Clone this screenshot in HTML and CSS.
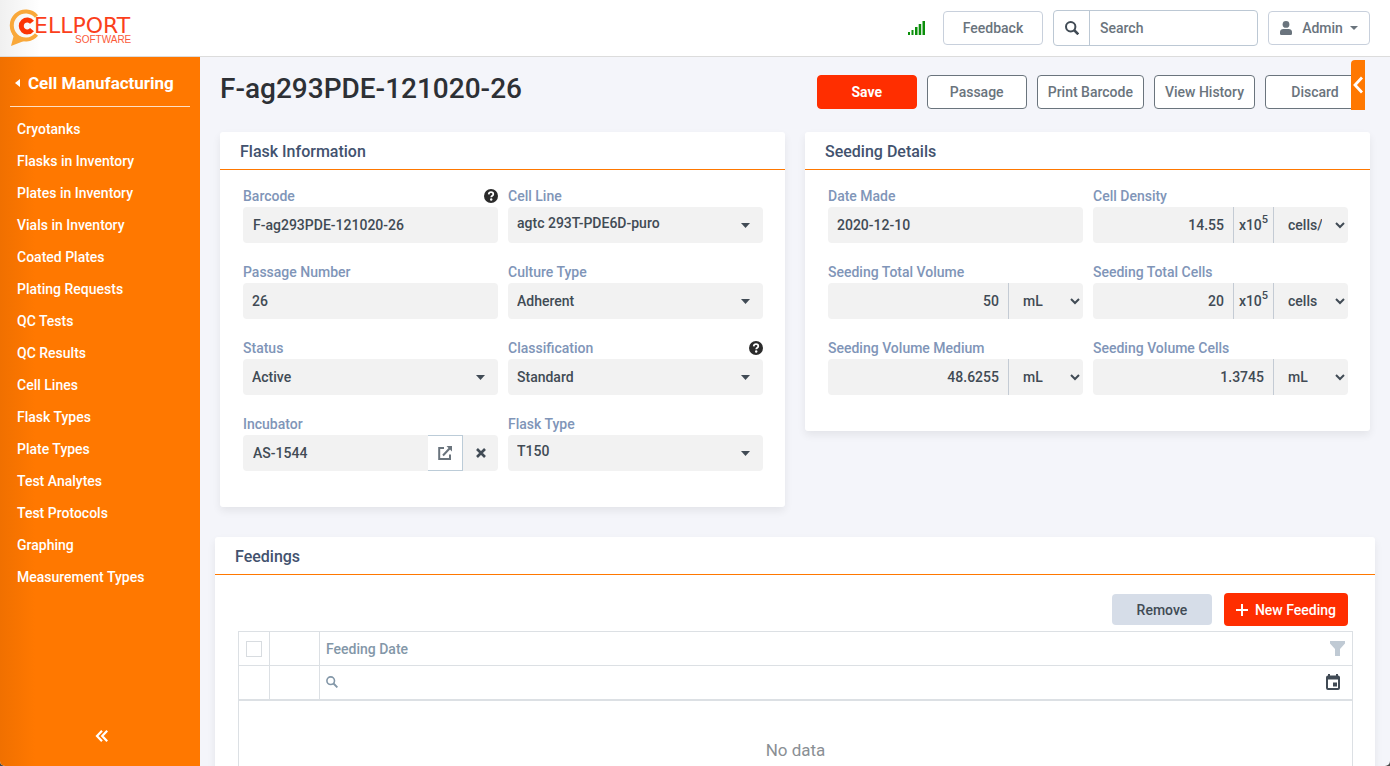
FILE: index.html
```html
<!DOCTYPE html>
<html lang="en">
<head>
<meta charset="utf-8">
<title>F-ag293PDE-121020-26</title>
<link rel="stylesheet" href="styles.css">
</head>
<body>
<div class="app">
  <header class="topbar">
    <a class="logo" href="#" aria-label="Cellport Software">
      <svg width="130" height="40" viewBox="0 0 130 40">
        <path d="M27.500 8.500A14 14 0 1 0 27.500 26.500" fill="none" stroke="#f9a83a" stroke-width="4"/>
        <path d="M3 25L4.500 28.500L2 38L15 33L12 29Z" fill="#f9a83a"/>
        <path d="M23 14.200A6 6 0 1 0 23 21.600" fill="none" stroke="#fb3505" stroke-width="5"/>
        <text class="logo-name" x="25" y="25">ELLPORT</text>
        <text class="logo-sub" x="66" y="35">SOFTWARE</text>
      </svg>
    </a>
    <div class="tools">
      <svg class="signal" width="18" height="14" viewBox="0 0 18 14" fill="#0b8f0b"><rect x="0" y="11" width="2" height="3"/><rect x="3.500" y="9" width="2" height="5"/><rect x="7" y="6" width="2.500" height="8"/><rect x="10.700" y="3" width="2.500" height="11"/><rect x="14.500" y="0" width="2.500" height="14"/></svg>
      <button class="btn btn-light" type="button">Feedback</button>
      <form class="search">
        <button class="search-btn" type="button" aria-label="Search"><svg width="14" height="14" viewBox="0 0 14 14" fill="none" stroke="#414b55" stroke-width="2"><circle cx="5.700" cy="5.700" r="4.700"/><path d="M9 9L13.300 13.300" stroke-width="2.600"/></svg></button>
        <input class="search-input" type="text" placeholder="Search" aria-label="Search">
      </form>
      <button class="btn btn-light btn-user" type="button">
        <svg width="12" height="14" viewBox="0 0 12 14" fill="#6a747d"><circle cx="6" cy="3.400" r="3.400"/><path d="M0 12.500V11C0 9 1.500 8 3.300 8H8.700C10.500 8 12 9 12 11V12.500Q12 14 10.700 14H1.300Q0 14 0 12.500Z"/></svg>
        <span>Admin</span>
        <svg class="user-caret" width="8" height="4" viewBox="0 0 8 4" fill="#6a747d"><path d="M0 0H8L4 4Z"/></svg>
      </button>
    </div>
  </header>

  <div class="shell">
    <nav class="sidebar">
      <a class="side-title" href="#"><svg width="5" height="8" viewBox="0 0 5 8" fill="#fff"><path d="M5 0V8L0 4Z"/></svg>Cell Manufacturing</a>
      <ul class="side-list">
        <li><a href="#">Cryotanks</a></li>
        <li><a href="#">Flasks in Inventory</a></li>
        <li><a href="#">Plates in Inventory</a></li>
        <li><a href="#">Vials in Inventory</a></li>
        <li><a href="#">Coated Plates</a></li>
        <li><a href="#">Plating Requests</a></li>
        <li><a href="#">QC Tests</a></li>
        <li><a href="#">QC Results</a></li>
        <li><a href="#">Cell Lines</a></li>
        <li><a href="#">Flask Types</a></li>
        <li><a href="#">Plate Types</a></li>
        <li><a href="#">Test Analytes</a></li>
        <li><a href="#">Test Protocols</a></li>
        <li><a href="#">Graphing</a></li>
        <li><a href="#">Measurement Types</a></li>
      </ul>
      <button class="collapse" type="button" aria-label="Collapse menu"><svg width="13" height="12" viewBox="0 0 13 12" fill="none" stroke="#fff" stroke-width="2.200"><path d="M7 .8L2 6L7 11.200M12.200 .8L7.200 6L12.200 11.200"/></svg></button>
    </nav>

    <main class="content">
      <div class="page-head">
        <h1>F-ag293PDE-121020-26</h1>
        <div class="actions">
          <button class="btn btn-save" type="button">Save</button>
          <button class="btn btn-outline" type="button">Passage</button>
          <button class="btn btn-outline" type="button">Print Barcode</button>
          <button class="btn btn-outline" type="button">View History</button>
          <button class="btn btn-outline" type="button">Discard</button>
          <button class="drawer-tab" type="button" aria-label="Open panel"><svg width="10" height="18" viewBox="0 0 10 18" fill="none" stroke="#fff" stroke-width="2.800"><path d="M9 1.500L2 9L9 16.500"/></svg></button>
        </div>
      </div>

      <div class="cards">
        <section class="card">
          <h2>Flask Information</h2>
          <div class="fields">
            <div class="field">
              <div class="label-row"><label for="barcode">Barcode</label><svg class="help" width="14" height="14" viewBox="0 0 14 14"><circle cx="7" cy="7" r="7" fill="#2b2b2b"/><path d="M4.700 5.300C4.900 3.800 5.900 3.200 7 3.200C8.300 3.200 9.300 4 9.300 5.200C9.300 6.700 7.200 6.700 7.200 8.300" fill="none" stroke="#fff" stroke-width="1.700"/><circle cx="7.200" cy="10.500" r="1.200" fill="#fff"/></svg></div>
              <div class="control"><input class="inset" id="barcode" type="text" value="F-ag293PDE-121020-26"></div>
            </div>
            <div class="field">
              <div class="label-row"><label for="line">Cell Line</label></div>
              <div class="control"><select class="raised" id="line"><option>agtc 293T-PDE6D-puro</option></select><svg class="caret" width="9" height="5" viewBox="0 0 9 5"><path d="M0 0H9L4.500 5Z"/></svg></div>
            </div>
            <div class="field">
              <div class="label-row"><label for="passage">Passage Number</label></div>
              <div class="control"><input id="passage" type="text" value="26"></div>
            </div>
            <div class="field">
              <div class="label-row"><label for="culture">Culture Type</label></div>
              <div class="control"><select id="culture"><option>Adherent</option></select><svg class="caret" width="9" height="5" viewBox="0 0 9 5"><path d="M0 0H9L4.500 5Z"/></svg></div>
            </div>
            <div class="field">
              <div class="label-row"><label for="status">Status</label></div>
              <div class="control"><select id="status"><option>Active</option></select><svg class="caret" width="9" height="5" viewBox="0 0 9 5"><path d="M0 0H9L4.500 5Z"/></svg></div>
            </div>
            <div class="field">
              <div class="label-row"><label for="class">Classification</label><svg class="help" width="14" height="14" viewBox="0 0 14 14"><circle cx="7" cy="7" r="7" fill="#2b2b2b"/><path d="M4.700 5.300C4.900 3.800 5.900 3.200 7 3.200C8.300 3.200 9.300 4 9.300 5.200C9.300 6.700 7.200 6.700 7.200 8.300" fill="none" stroke="#fff" stroke-width="1.700"/><circle cx="7.200" cy="10.500" r="1.200" fill="#fff"/></svg></div>
              <div class="control"><select id="class"><option>Standard</option></select><svg class="caret" width="9" height="5" viewBox="0 0 9 5"><path d="M0 0H9L4.500 5Z"/></svg></div>
            </div>
            <div class="field">
              <div class="label-row"><label for="incubator">Incubator</label></div>
              <div class="control">
                <input class="inset" id="incubator" type="text" value="AS-1544">
                <button class="open-btn" type="button" aria-label="Open incubator"><svg width="14" height="14" viewBox="0 0 14 14" fill="none" stroke="#6a747d" stroke-width="2"><path d="M6 2H1.200V13H12V8.500M5 9.500L12 2"/><path d="M8.500 0H14V5.500Z" fill="#6a747d" stroke="none"/></svg></button>
                <button class="clear-btn" type="button" aria-label="Clear incubator"><svg width="10" height="10" viewBox="0 0 10 10" stroke="#414b55" stroke-width="2.600"><path d="M1 1L9 9M9 1L1 9"/></svg></button>
              </div>
            </div>
            <div class="field">
              <div class="label-row"><label for="flask">Flask Type</label></div>
              <div class="control"><select class="raised" id="flask"><option>T150</option></select><svg class="caret" width="9" height="5" viewBox="0 0 9 5"><path d="M0 0H9L4.500 5Z"/></svg></div>
            </div>
          </div>
        </section>

        <section class="card">
          <h2>Seeding Details</h2>
          <div class="fields">
            <div class="field">
              <div class="label-row"><label for="made">Date Made</label></div>
              <div class="control"><input id="made" type="text" value="2020-12-10"></div>
            </div>
            <div class="field">
              <div class="label-row"><label for="density">Cell Density</label></div>
              <div class="control"><input class="num" id="density" type="text" value="14.55"><span class="power">x10<sup>5</sup></span><span class="unit"><select aria-label="Cell Density unit"><option>cells/mL</option></select><svg class="chevron" width="10" height="7" viewBox="0 0 10 7"><path d="M1 1L5 5L9 1"/></svg></span></div>
            </div>
            <div class="field">
              <div class="label-row"><label for="tvol">Seeding Total Volume</label></div>
              <div class="control"><input class="num" id="tvol" type="text" value="50"><span class="unit"><select aria-label="Seeding Total Volume unit"><option>mL</option></select><svg class="chevron" width="10" height="7" viewBox="0 0 10 7"><path d="M1 1L5 5L9 1"/></svg></span></div>
            </div>
            <div class="field">
              <div class="label-row"><label for="tcells">Seeding Total Cells</label></div>
              <div class="control"><input class="num" id="tcells" type="text" value="20"><span class="power">x10<sup>5</sup></span><span class="unit"><select aria-label="Seeding Total Cells unit"><option>cells</option></select><svg class="chevron" width="10" height="7" viewBox="0 0 10 7"><path d="M1 1L5 5L9 1"/></svg></span></div>
            </div>
            <div class="field">
              <div class="label-row"><label for="mvol">Seeding Volume Medium</label></div>
              <div class="control"><input class="num" id="mvol" type="text" value="48.6255"><span class="unit"><select aria-label="Seeding Volume Medium unit"><option>mL</option></select><svg class="chevron" width="10" height="7" viewBox="0 0 10 7"><path d="M1 1L5 5L9 1"/></svg></span></div>
            </div>
            <div class="field">
              <div class="label-row"><label for="cvol">Seeding Volume Cells</label></div>
              <div class="control"><input class="num" id="cvol" type="text" value="1.3745"><span class="unit"><select aria-label="Seeding Volume Cells unit"><option>mL</option></select><svg class="chevron" width="10" height="7" viewBox="0 0 10 7"><path d="M1 1L5 5L9 1"/></svg></span></div>
            </div>
          </div>
        </section>
      </div>

      <section class="card feedings">
        <h2>Feedings</h2>
        <div class="feed-body">
          <div class="feed-actions">
            <button class="btn btn-remove" type="button">Remove</button>
            <button class="btn btn-new" type="button"><svg width="12" height="12" viewBox="0 0 12 12" stroke="#fff" stroke-width="2"><path d="M6 0V12M0 6H12"/></svg>New Feeding</button>
          </div>
          <table class="grid">
            <colgroup><col class="col-check"><col class="col-tools"><col></colgroup>
            <thead>
              <tr>
                <th><input class="check" type="checkbox" aria-label="Select all"></th>
                <th></th>
                <th><div class="cell">Feeding Date<svg width="15" height="15" viewBox="0 0 15 15" fill="#c0cad4"><path d="M0 0H15V2.500L10 8V15H5V8L0 2.500Z"/></svg></div></th>
              </tr>
              <tr class="filter-row">
                <td></td>
                <td></td>
                <td><div class="cell"><svg width="12" height="12" viewBox="0 0 12 12" fill="none" stroke="#8397a8" stroke-width="1.600"><circle cx="4.700" cy="4.700" r="3.800"/><path d="M7.500 7.500L11.400 11.400" stroke-width="1.900"/></svg><svg class="calendar" width="14" height="16" viewBox="0 0 14 16"><path fill="#414b55" fill-rule="evenodd" d="M2 0H4V1.500H10V0H12V1.500Q14 1.500 14 3.500V14Q14 16 12 16H2Q0 16 0 14V3.500Q0 1.500 2 1.500ZM2 5.500V14H12V5.500ZM7 8.500H11V12.500H7Z"/></svg></div></td>
              </tr>
            </thead>
            <tbody><tr><td class="empty" colspan="3">No data</td></tr></tbody>
          </table>
        </div>
      </section>
    </main>
  </div>
</div>
</body>
</html>
```
FILE: styles.css
```css
* { box-sizing: border-box; }
html { background: #4a4a4a; }
body {
  margin: 0;
  font: 500 14px/20px Roboto, "Liberation Sans", sans-serif;
  color: #414b55;
}
button, input, select { font: inherit; color: inherit; margin: 0; }
a { color: inherit; text-decoration: none; }
svg { display: block; flex: none; }

.app {
  display: flex;
  flex-direction: column;
  height: 100vh;
  overflow: hidden;
  border-radius: 0 0 5px 5px;
  background: #f4f5fa;
}

.topbar {
  display: flex;
  flex: none;
  align-items: center;
  justify-content: space-between;
  height: 57px;
  padding: 0 20px 0 9px;
  border-bottom: 1px solid #dcdcdc;
  background: linear-gradient(90deg, #f0f0f0, #fff 40px);
}
.logo-name { font: 400 22px "DejaVu Sans", sans-serif; fill: #fb3f1c; }
.logo-sub { font: 400 10px "Liberation Sans", sans-serif; fill: #fb5a3a; }
.tools { display: flex; align-items: center; gap: 10px; }
.signal { margin-right: 7px; }

.btn {
  display: flex;
  align-items: center;
  justify-content: center;
  min-width: 100px;
  height: 34px;
  padding: 0 10px;
  border: 1px solid #6a747d;
  border-radius: 4px;
  background: #fff;
  color: #6a747d;
  white-space: nowrap;
}
.btn-light { border-color: #c8d0dc; }
.btn-user { gap: 10px; width: 102px; }
.user-caret { margin-left: -3px; }
.btn-save { border-color: #ff2e00; background: #ff2e00; color: #fff; font-weight: 700; }

.search {
  display: flex;
  width: 205px;
  height: 36px;
  border: 1px solid #bcc8d4;
  border-radius: 4px;
  background: #fff;
}
.search-btn {
  display: flex;
  align-items: center;
  justify-content: center;
  width: 36px;
  padding: 0;
  border: 0;
  border-right: 1px solid #bcc8d4;
  background: none;
}
.search-input { flex: 1; min-width: 0; padding: 0 10px; border: 0; background: none; outline: 0; }
.search-input::placeholder { color: #6a747d; opacity: 1; }

.shell { display: flex; flex: 1; min-height: 0; }
.sidebar {
  display: flex;
  flex: none;
  flex-direction: column;
  width: 200px;
  padding: 10px;
  background: linear-gradient(90deg, #f07000, #ff7800 35px);
  color: #fff;
}
.side-title {
  display: flex;
  align-items: center;
  gap: 8px;
  height: 40px;
  padding: 0 5px 8px;
  border-bottom: 1px solid #ffe0c4;
  font-size: 17px;
  line-height: 24px;
  font-weight: 700;
}
.side-title { padding-top: 0; }
.side-list { margin: 6px 0 0; padding: 0 7px; list-style: none; }
.side-list a { display: block; line-height: 32px; }
.collapse { margin: auto auto 14px; padding: 0 0 0 2px; border: 0; background: none; }

.content { flex: 1; min-width: 0; padding: 18px 15px 0; overflow: hidden; }
.page-head { display: flex; align-items: center; justify-content: space-between; height: 34px; padding: 0 10px 0 5px; }
h1 { margin: 0 0 6px; font-size: 28px; line-height: 34px; font-weight: 500; color: #2d3035; }
.actions { position: relative; display: flex; gap: 10px; }
.drawer-tab {
  position: absolute;
  top: -15px;
  right: 0;
  display: flex;
  align-items: center;
  justify-content: center;
  width: 14px;
  height: 50px;
  padding: 0;
  border: 0;
  border-radius: 4px 0 0 0;
  background: #ff7800;
}

.cards { display: grid; grid-template-columns: 1fr 1fr; gap: 20px; align-items: start; margin-top: 23px; padding: 0 5px; }
.card { border-radius: 3px; background: #fff; box-shadow: 0 4px 8px rgba(0, 0, 0, .07); }
h2 {
  margin: 0;
  padding: 2px 20px 0;
  border-bottom: 1px solid #ff7800;
  font-size: 16px;
  line-height: 35px;
  font-weight: 500;
  color: #42526e;
}
.fields { display: grid; grid-template-columns: 1fr 1fr; gap: 18px 10px; padding: 15px 22px 36px 23px; }
.field { min-width: 0; }
.label-row { display: flex; align-items: center; justify-content: space-between; height: 22px; color: #8095b8; }
.control { position: relative; display: flex; height: 36px; border-radius: 4px; background: #f2f2f2; overflow: hidden; }
.control input, .control select {
  flex: 1;
  min-width: 0;
  padding: 0 9px;
  border: 0;
  border-radius: 0;
  outline: 0;
  background: none;
  appearance: none;
}
.control .inset { padding-left: 10px; }
.control .raised { padding-bottom: 4px; }
.control .num { padding-right: 9px; text-align: right; }
.caret { position: absolute; top: 16px; right: 13px; fill: #414b55; pointer-events: none; }
.open-btn, .clear-btn { display: flex; align-items: center; justify-content: center; width: 35px; padding: 0; border: 0; background: none; }
.open-btn { border: 1px solid #bcccd8; border-left: 0; background: #fff; }
.power { display: flex; align-items: center; justify-content: center; width: 40px; border-left: 1px solid #c4cbd4; }
.power sup { font-size: 11px; line-height: 12px; margin-bottom: 10px; }
.unit { position: relative; display: flex; width: 75px; border-left: 1px solid #c4cbd4; }
.control .unit select { padding: 0 26px 0 14px; }
.chevron { position: absolute; top: 15px; right: 3px; fill: none; stroke: #414b55; stroke-width: 2; pointer-events: none; }

.feedings { margin-top: 30px; }
.feed-body { padding: 18px 22px 30px 23px; }
.feed-actions { display: flex; align-items: center; justify-content: flex-end; gap: 12px; margin-bottom: 5px; padding-right: 5px; }
.btn-remove { height: 31px; border: 0; background: #d6dde8; color: #414b55; }
.btn-new { gap: 7px; height: 33px; padding: 0 12px; border: 0; background: #ff2e00; color: #fff; }

.grid { width: 100%; border-collapse: collapse; table-layout: fixed; border: 1px solid #dce0e4; }
.col-check { width: 31px; }
.col-tools { width: 50px; }
.grid th, .grid td { height: 34px; padding: 0; border: 1px solid #dce0e4; }
.grid .filter-row td { border-bottom-width: 2px; }
.grid th { font-weight: 500; text-align: left; color: #8397a8; }
.check {
  display: block;
  width: 16px;
  height: 16px;
  margin: 0 auto;
  border: 1px solid #d8dce0;
  background: #fff;
  appearance: none;
}
.cell { display: flex; align-items: center; justify-content: space-between; padding: 0 7px 0 6px; }
.calendar { margin-right: 5px; }
.grid .empty { height: 100px; text-align: center; font-size: 17px; font-weight: 400; color: #8a8f94; }
```
